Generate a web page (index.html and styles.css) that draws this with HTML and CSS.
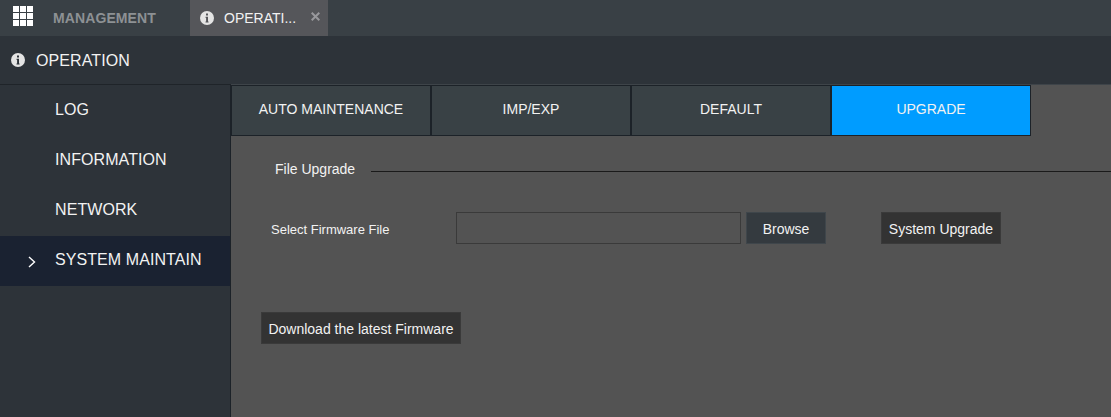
FILE: index.html
```html
<!DOCTYPE html>
<html lang="en">
<head>
    <meta charset="UTF-8">
    <title>OPERATION</title>
    <link rel="stylesheet" href="styles.css">
</head>
<body>

<!-- top tabs -->
<div class="topbar">
    <div class="home-btn">
        <svg class="grid-icon" width="20" height="20" viewBox="0 0 20 20">
            <path fill="#fff" d="M0 0h6v6H0zM7 0h6v6H7zM14 0h6v6h-6zM0 7h6v6H0zM7 7h6v6H7zM14 7h6v6h-6zM0 14h6v6H0zM7 14h6v6H7zM14 14h6v6h-6z"/>
        </svg>
    </div>
    <div class="top-title">MANAGEMENT</div>
    <div class="top-tab">
        <svg class="info-icon" width="14" height="14" viewBox="0 0 14 14">
            <circle cx="7" cy="7" r="7" fill="#e4e4e4"/>
            <path fill="#55565a" d="M6 2.5h2v2H6zM5.6 5.8H8v4.6h.6v1.1H5.5v-1.1h.6V6.9h-.5z"/>
        </svg>
        <span class="top-tab-text">OPERATI...</span>
        <svg class="close-icon" width="9" height="9" viewBox="0 0 9 9">
            <path fill="none" stroke="#98989c" stroke-width="2" d="M.7.7l7.6 7.6M8.3.7L.7 8.3"/>
        </svg>
    </div>
</div>

<div class="page-head">
    <svg class="info-icon" width="14" height="14" viewBox="0 0 14 14">
        <circle cx="7" cy="7" r="7" fill="#e4e4e4"/>
        <path fill="#2d3339" d="M6 2.5h2v2H6zM5.6 5.8H8v4.6h.6v1.1H5.5v-1.1h.6V6.9h-.5z"/>
    </svg>
    <span>OPERATION</span>
</div>

<div class="main">
    <!-- left menu -->
    <div class="sidebar">
        <div class="menu-item">LOG</div>
        <div class="menu-item">INFORMATION</div>
        <div class="menu-item">NETWORK</div>
        <div class="menu-item active">
            <svg class="arrow" width="8" height="12" viewBox="0 0 8 12">
                <path fill="none" stroke="#fff" stroke-width="1.4" d="M1 1l5.5 5L1 11"/>
            </svg>
            SYSTEM MAINTAIN
        </div>
    </div>

    <div class="content">
        <div class="tabs">
            <div class="tab">AUTO MAINTENANCE</div>
            <div class="tab">IMP/EXP</div>
            <div class="tab">DEFAULT</div>
            <div class="tab active">UPGRADE</div>
        </div>

        <div class="section-title">
            <span>File Upgrade</span>
            <div class="section-line"></div>
        </div>

        <div class="file-row">
            <label class="file-label">Select Firmware File</label>
            <input class="file-input" type="text">
            <button class="btn btn-browse">Browse</button>
            <button class="btn btn-upgrade">System Upgrade</button>
        </div>

        <button class="btn btn-download">Download the latest Firmware</button>
    </div>
</div>

</body>
</html>
```

FILE: styles.css
```css
:root {
    --line: #1c2228;
    --text: #f2f2f2;
    --panel: #2d3339;
    --tab: #394145;
}

html, body {
    height: 100%;
}

body {
    margin: 0;
    background: #535353;
    color: var(--text);
    font-family: "Liberation Sans", Arial, sans-serif;
    overflow: hidden;
    display: flex;
    flex-direction: column;
}

/* top tabs */
.topbar {
    height: 36px;
    background: #394045;
    display: flex;
    align-items: center;
    flex-shrink: 0;
}

.home-btn {
    width: 53px;
    padding-left: 13px;
    box-sizing: border-box;
    display: flex;
    margin-top: -4px;
}

.top-title {
    width: 137px;
    font-size: 14px;
    font-weight: bold;
    letter-spacing: 0.1px;
    color: #8d9194;
}

.top-tab {
    width: 138px;
    height: 36px;
    background: #55565a;
    display: flex;
    align-items: center;
    padding-left: 10px;
    box-sizing: border-box;
    font-size: 14px;
}

.top-tab-text {
    margin-left: 10px;
    width: 87px;
}

.close-icon {
    margin-top: -3px;
}

.page-head {
    height: 48px;
    background: var(--panel);
    border-bottom: 1px solid #1f2429;
    display: flex;
    align-items: center;
    padding-left: 11px;
    font-size: 16px;
    letter-spacing: 0.1px;
    flex-shrink: 0;
}

.page-head span {
    margin-left: 11px;
    padding-top: 2px;
}

.main {
    flex: 1;
    display: flex;
    min-height: 0;
}

/* left menu */
.sidebar {
    width: 230px;
    padding-top: 1px;
    background: var(--panel);
    border-right: 1px solid var(--line);
    flex-shrink: 0;
}

.menu-item {
    height: 50px;
    line-height: 48px;
    padding-left: 55px;
    font-size: 16px;
    letter-spacing: 0.08px;
    position: relative;
}

.menu-item.active {
    background: #1a2231;
}

.arrow {
    position: absolute;
    left: 28px;
    top: 20px;
}

.content {
    flex: 1;
    border-top: 1px solid #3e4449;
    margin-top: -1px;
}

.tabs {
    display: flex;
}

.tab {
    width: 200px;
    height: 51px;
    line-height: 47px;
    background: var(--tab);
    border: 1px solid var(--line);
    box-sizing: border-box;
    text-align: center;
    font-size: 14px;
}

.tab.active {
    background: #009cff;
}

.section-title {
    display: flex;
    align-items: center;
    margin: 23px 0 0 44px;
    font-size: 14px;
    height: 20px;
}

.section-line {
    flex: 1;
    height: 1px;
    background: #1a1a1a;
    margin-left: 16px;
    margin-top: 4px;
}

.file-row {
    display: flex;
    align-items: center;
    margin: 33px 0 0 40px;
    height: 32px;
}

.file-label {
    width: 185px;
    font-size: 13px;
    margin-top: 3px;
}

.file-input {
    width: 285px;
    height: 32px;
    box-sizing: border-box;
    background: #535353;
    border: 1px solid #3a3a3a;
    margin: 0;
    padding: 0 6px;
}

.btn {
    height: 32px;
    box-sizing: border-box;
    border: 1px solid #3a3a3a;
    background: #333;
    color: var(--text);
    font-family: inherit;
    font-size: 14px;
    padding: 2px 0 0;
    display: block;
}

.btn-browse {
    width: 80px;
    margin-left: 5px;
    background: #343a3f;
    border-color: #3f464b;
}

.btn-upgrade {
    width: 120px;
    margin-left: 55px;
}

.btn-download {
    width: 200px;
    margin: 68px 0 0 30px;
}
```
